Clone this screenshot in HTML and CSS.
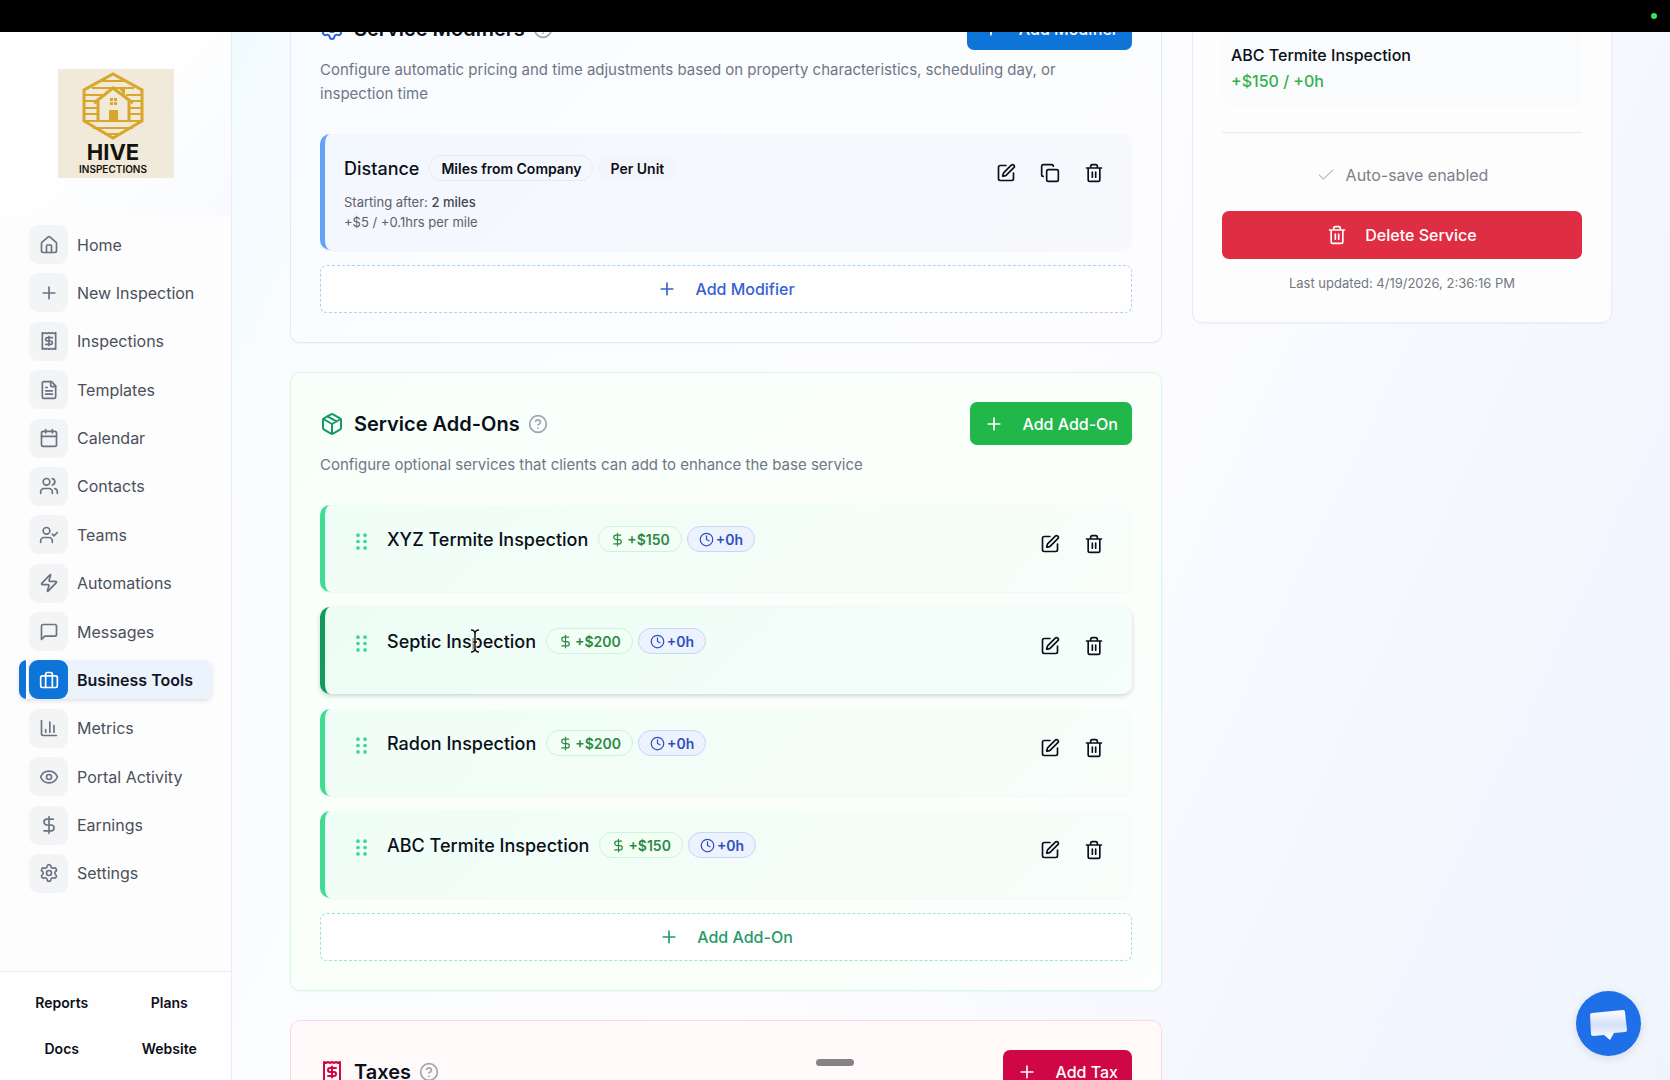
FILE: index.html
```html
<!DOCTYPE html>
<html lang="en">
<head>
    <meta charset="UTF-8">
    <meta name="viewport" content="width=device-width, initial-scale=1.0">
    <title>Hive Inspections - Business Tools</title>
    <link rel="stylesheet" href="styles.css">
</head>
<body>
    <!-- icon sprite -->
    <svg class="sprite" aria-hidden="true">
        <symbol id="i-home" viewBox="0 0 24 24"><path d="M15 21v-8a1 1 0 0 0-1-1h-4a1 1 0 0 0-1 1v8"/><path d="M3 10a2 2 0 0 1 .709-1.528l7-5.999a2 2 0 0 1 2.582 0l7 5.999A2 2 0 0 1 21 10v9a2 2 0 0 1-2 2H5a2 2 0 0 1-2-2z"/></symbol>
        <symbol id="i-plus" viewBox="0 0 24 24"><path d="M5 12h14M12 5v14"/></symbol>
        <symbol id="i-receipt" viewBox="0 0 24 24"><path d="M4 2v20l2-1 2 1 2-1 2 1 2-1 2 1 2-1 2 1V2l-2 1-2-1-2 1-2-1-2 1-2-1-2 1Z"/><path d="M16 8h-6a2 2 0 1 0 0 4h4a2 2 0 1 1 0 4H8M12 17.5v-11"/></symbol>
        <symbol id="i-file" viewBox="0 0 24 24"><path d="M15 2H6a2 2 0 0 0-2 2v16a2 2 0 0 0 2 2h12a2 2 0 0 0 2-2V7Z"/><path d="M14 2v4a2 2 0 0 0 2 2h4M10 9H8M16 13H8M16 17H8"/></symbol>
        <symbol id="i-calendar" viewBox="0 0 24 24"><path d="M8 2v4M16 2v4M3 10h18"/><rect width="18" height="18" x="3" y="4" rx="2"/></symbol>
        <symbol id="i-users" viewBox="0 0 24 24"><path d="M16 21v-2a4 4 0 0 0-4-4H6a4 4 0 0 0-4 4v2"/><circle cx="9" cy="7" r="4"/><path d="M22 21v-2a4 4 0 0 0-3-3.870M16 3.130a4 4 0 0 1 0 7.750"/></symbol>
        <symbol id="i-user-check" viewBox="0 0 24 24"><path d="m16 11 2 2 4-4M16 21v-2a4 4 0 0 0-4-4H6a4 4 0 0 0-4 4v2"/><circle cx="9" cy="7" r="4"/></symbol>
        <symbol id="i-zap" viewBox="0 0 24 24"><path d="M4 14a1 1 0 0 1-.78-1.630l9.900-10.200a.5.5 0 0 1 .86.46l-1.920 6.020A1 1 0 0 0 13 10h7a1 1 0 0 1 .78 1.630l-9.900 10.200a.5.5 0 0 1-.86-.46l1.920-6.020A1 1 0 0 0 11 14z"/></symbol>
        <symbol id="i-message" viewBox="0 0 24 24"><path d="M21 15a2 2 0 0 1-2 2H7l-4 4V5a2 2 0 0 1 2-2h14a2 2 0 0 1 2 2z"/></symbol>
        <symbol id="i-briefcase" viewBox="0 0 24 24"><rect width="20" height="14" x="2" y="7" rx="2"/><path d="M16 21V5a2 2 0 0 0-2-2h-4a2 2 0 0 0-2 2v16"/></symbol>
        <symbol id="i-chart" viewBox="0 0 24 24"><path d="M3 3v16a2 2 0 0 0 2 2h16M18 17V9M13 17V5M8 17v-3"/></symbol>
        <symbol id="i-eye" viewBox="0 0 24 24"><path d="M2.062 12.348a1 1 0 0 1 0-.696 10.750 10.750 0 0 1 19.876 0 1 1 0 0 1 0 .696 10.750 10.750 0 0 1-19.876 0"/><circle cx="12" cy="12" r="3"/></symbol>
        <symbol id="i-dollar" viewBox="0 0 24 24"><path d="M12 2v20M17 5H9.500a3.500 3.500 0 0 0 0 7h5a3.500 3.500 0 0 1 0 7H6"/></symbol>
        <symbol id="i-settings" viewBox="0 0 24 24"><path d="M9.671 4.136a2.340 2.340 0 0 1 4.659 0 2.340 2.340 0 0 0 3.319 1.915 2.340 2.340 0 0 1 2.330 4.033 2.340 2.340 0 0 0 0 3.831 2.340 2.340 0 0 1-2.330 4.033 2.340 2.340 0 0 0-3.319 1.915 2.340 2.340 0 0 1-4.659 0 2.340 2.340 0 0 0-3.320-1.915 2.340 2.340 0 0 1-2.330-4.033 2.340 2.340 0 0 0 0-3.831A2.340 2.340 0 0 1 6.350 6.051a2.340 2.340 0 0 0 3.319-1.915"/><circle cx="12" cy="12" r="3"/></symbol>
        <symbol id="i-help" viewBox="0 0 24 24"><circle cx="12" cy="12" r="10"/><path d="M9.090 9a3 3 0 0 1 5.830 1c0 2-3 3-3 3M12 17h.01"/></symbol>
        <symbol id="i-edit" viewBox="0 0 24 24"><path d="M12 3H5a2 2 0 0 0-2 2v14a2 2 0 0 0 2 2h14a2 2 0 0 0 2-2v-7"/><path d="M18.375 2.625a1 1 0 0 1 3 3l-9.013 9.014a2 2 0 0 1-.853.505l-2.873.84a.5.5 0 0 1-.62-.62l.84-2.873a2 2 0 0 1 .506-.852z"/></symbol>
        <symbol id="i-copy" viewBox="0 0 24 24"><rect width="14" height="14" x="8" y="8" rx="2"/><path d="M4 16c-1.100 0-2-.9-2-2V4c0-1.100.9-2 2-2h10c1.100 0 2 .9 2 2"/></symbol>
        <symbol id="i-trash" viewBox="0 0 24 24"><path d="M3 6h18M19 6v14c0 1-1 2-2 2H7c-1 0-2-1-2-2V6M8 6V4c0-1 1-2 2-2h4c1 0 2 1 2 2v2M10 11v6M14 11v6"/></symbol>
        <symbol id="i-package" viewBox="0 0 24 24"><path d="M11 21.730a2 2 0 0 0 2 0l7-4A2 2 0 0 0 21 16V8a2 2 0 0 0-1-1.730l-7-4a2 2 0 0 0-2 0l-7 4A2 2 0 0 0 3 8v8a2 2 0 0 0 1 1.730zM12 22V12"/><path d="M3.290 7 12 12l8.710-5M7.500 4.270l9 5.150"/></symbol>
        <symbol id="i-clock" viewBox="0 0 24 24"><circle cx="12" cy="12" r="10"/><path d="M12 6v6l4 2"/></symbol>
        <symbol id="i-check" viewBox="0 0 24 24"><path d="M20 6 9 17l-5-5"/></symbol>
        <symbol id="i-grip" viewBox="0 0 24 24"><g fill="currentColor" stroke="none"><circle cx="7" cy="3" r="2.600"/><circle cx="17" cy="3" r="2.600"/><circle cx="7" cy="12" r="2.600"/><circle cx="17" cy="12" r="2.600"/><circle cx="7" cy="21" r="2.600"/><circle cx="17" cy="21" r="2.600"/></g></symbol>
    </svg>

    <div class="top-bar"><span class="camera-dot"></span></div>

    <div class="app">
        <aside class="sidebar">
            <div class="brand">
                <svg class="logo" viewBox="0 0 116 109" role="img" aria-label="Hive Inspections">
                    <rect width="116" height="109" fill="#f1e9d9"/>
                    <g fill="none" stroke="#d8a62b" stroke-width="2">
                        <path d="M55 5 84 21v31L55 69 26 52V21Z" stroke-width="3"/>
                        <path d="M44 12h22M34 19h42M27 26h17M68 26h16M27 32h11M73 32h11M27 39h13M71 39h13M27 45h13M71 45h13M27 52h57M35 59h40M46 65h18"/>
                        <path d="M40 52V30M71 52V30M36 34l19-15 20 15" stroke-width="3"/>
                    </g>
                    <path d="M60 18h7v9z" fill="#d8a62b"/>
                    <path d="M51 41h9v11h-9zM52 29h3v3h-3zM56 29h3v3h-3zM52 33h3v3h-3zM56 33h3v3h-3z" fill="#d8a62b"/>
                    <text class="logo-name" x="55" y="91" text-anchor="middle">HIVE</text>
                    <text class="logo-sub" x="55" y="104" text-anchor="middle">INSPECTIONS</text>
                </svg>
            </div>
            <nav class="nav">
                <a class="nav-item" href="#"><span class="nav-icon"><svg class="icon"><use href="#i-home"/></svg></span>Home</a>
                <a class="nav-item" href="#"><span class="nav-icon"><svg class="icon"><use href="#i-plus"/></svg></span>New Inspection</a>
                <a class="nav-item" href="#"><span class="nav-icon"><svg class="icon"><use href="#i-receipt"/></svg></span>Inspections</a>
                <a class="nav-item" href="#"><span class="nav-icon"><svg class="icon"><use href="#i-file"/></svg></span>Templates</a>
                <a class="nav-item" href="#"><span class="nav-icon"><svg class="icon"><use href="#i-calendar"/></svg></span>Calendar</a>
                <a class="nav-item" href="#"><span class="nav-icon"><svg class="icon"><use href="#i-users"/></svg></span>Contacts</a>
                <a class="nav-item" href="#"><span class="nav-icon"><svg class="icon"><use href="#i-user-check"/></svg></span>Teams</a>
                <a class="nav-item" href="#"><span class="nav-icon"><svg class="icon"><use href="#i-zap"/></svg></span>Automations</a>
                <a class="nav-item" href="#"><span class="nav-icon"><svg class="icon"><use href="#i-message"/></svg></span>Messages</a>
                <a class="nav-item active" href="#" aria-current="page"><span class="nav-icon"><svg class="icon"><use href="#i-briefcase"/></svg></span>Business Tools</a>
                <a class="nav-item" href="#"><span class="nav-icon"><svg class="icon"><use href="#i-chart"/></svg></span>Metrics</a>
                <a class="nav-item" href="#"><span class="nav-icon"><svg class="icon"><use href="#i-eye"/></svg></span>Portal Activity</a>
                <a class="nav-item" href="#"><span class="nav-icon"><svg class="icon"><use href="#i-dollar"/></svg></span>Earnings</a>
                <a class="nav-item" href="#"><span class="nav-icon"><svg class="icon"><use href="#i-settings"/></svg></span>Settings</a>
            </nav>
            <div class="side-links">
                <a href="#">Reports</a>
                <a href="#">Plans</a>
                <a href="#">Docs</a>
                <a href="#">Website</a>
            </div>
        </aside>

        <main class="main">
            <div class="content">
                <div class="column">
                    <section class="card modifiers">
                        <div class="card-header">
                            <svg class="icon title-icon"><use href="#i-settings"/></svg>
                            <h2>Service Modifiers</h2>
                            <button class="help" aria-label="About modifiers"><svg class="icon"><use href="#i-help"/></svg></button>
                            <button class="btn"><svg class="icon"><use href="#i-plus"/></svg>Add Modifier</button>
                        </div>
                        <p class="description">Configure automatic pricing and time adjustments based on property characteristics, scheduling day, or inspection time</p>
                        <div class="items">
                            <div class="item">
                                <div class="item-body">
                                    <div class="item-title">
                                        <h3>Distance</h3>
                                        <span class="badge outline">Miles from Company</span>
                                        <span class="badge plain">Per Unit</span>
                                    </div>
                                    <p class="detail">Starting after: <strong>2 miles</strong><br>+$5 / +0.1hrs per mile</p>
                                </div>
                                <div class="actions">
                                    <button aria-label="Edit"><svg class="icon"><use href="#i-edit"/></svg></button>
                                    <button aria-label="Duplicate"><svg class="icon"><use href="#i-copy"/></svg></button>
                                    <button aria-label="Delete"><svg class="icon"><use href="#i-trash"/></svg></button>
                                </div>
                            </div>
                            <button class="add-row"><svg class="icon"><use href="#i-plus"/></svg>Add Modifier</button>
                        </div>
                    </section>

                    <section class="card addons">
                        <div class="card-header">
                            <svg class="icon title-icon"><use href="#i-package"/></svg>
                            <h2>Service Add-Ons</h2>
                            <button class="help" aria-label="About add-ons"><svg class="icon"><use href="#i-help"/></svg></button>
                            <button class="btn"><svg class="icon"><use href="#i-plus"/></svg>Add Add-On</button>
                        </div>
                        <p class="description">Configure optional services that clients can add to enhance the base service</p>
                        <div class="items">
                            <div class="item">
                                <svg class="icon grip"><use href="#i-grip"/></svg>
                                <div class="item-title">
                                    <h3>XYZ Termite Inspection</h3>
                                    <span class="badge price"><svg class="icon"><use href="#i-dollar"/></svg>+$150</span>
                                    <span class="badge time"><svg class="icon"><use href="#i-clock"/></svg>+0h</span>
                                </div>
                                <div class="actions">
                                    <button aria-label="Edit"><svg class="icon"><use href="#i-edit"/></svg></button>
                                    <button aria-label="Delete"><svg class="icon"><use href="#i-trash"/></svg></button>
                                </div>
                            </div>
                            <div class="item hovered">
                                <svg class="icon grip"><use href="#i-grip"/></svg>
                                <div class="item-title">
                                    <h3>Septic Inspection</h3>
                                    <span class="badge price"><svg class="icon"><use href="#i-dollar"/></svg>+$200</span>
                                    <span class="badge time"><svg class="icon"><use href="#i-clock"/></svg>+0h</span>
                                </div>
                                <div class="actions">
                                    <button aria-label="Edit"><svg class="icon"><use href="#i-edit"/></svg></button>
                                    <button aria-label="Delete"><svg class="icon"><use href="#i-trash"/></svg></button>
                                </div>
                                <svg class="text-cursor" viewBox="0 0 10 24" aria-hidden="true"><path d="M1 1q4 0 4 4v14q0 4-4 4M9 1q-4 0-4 4M9 23q-4 0-4-4M3 13h4" stroke="#fff" stroke-width="3"/><path d="M1 1q4 0 4 4v14q0 4-4 4M9 1q-4 0-4 4M9 23q-4 0-4-4M3 13h4" stroke="#111" stroke-width="1.500"/></svg>
                            </div>
                            <div class="item">
                                <svg class="icon grip"><use href="#i-grip"/></svg>
                                <div class="item-title">
                                    <h3>Radon Inspection</h3>
                                    <span class="badge price"><svg class="icon"><use href="#i-dollar"/></svg>+$200</span>
                                    <span class="badge time"><svg class="icon"><use href="#i-clock"/></svg>+0h</span>
                                </div>
                                <div class="actions">
                                    <button aria-label="Edit"><svg class="icon"><use href="#i-edit"/></svg></button>
                                    <button aria-label="Delete"><svg class="icon"><use href="#i-trash"/></svg></button>
                                </div>
                            </div>
                            <div class="item">
                                <svg class="icon grip"><use href="#i-grip"/></svg>
                                <div class="item-title">
                                    <h3>ABC Termite Inspection</h3>
                                    <span class="badge price"><svg class="icon"><use href="#i-dollar"/></svg>+$150</span>
                                    <span class="badge time"><svg class="icon"><use href="#i-clock"/></svg>+0h</span>
                                </div>
                                <div class="actions">
                                    <button aria-label="Edit"><svg class="icon"><use href="#i-edit"/></svg></button>
                                    <button aria-label="Delete"><svg class="icon"><use href="#i-trash"/></svg></button>
                                </div>
                            </div>
                            <button class="add-row"><svg class="icon"><use href="#i-plus"/></svg>Add Add-On</button>
                        </div>
                    </section>

                    <section class="card taxes">
                        <div class="card-header">
                            <svg class="icon title-icon"><use href="#i-receipt"/></svg>
                            <h2>Taxes</h2>
                            <button class="help" aria-label="About taxes"><svg class="icon"><use href="#i-help"/></svg></button>
                            <button class="btn"><svg class="icon"><use href="#i-plus"/></svg>Add Tax</button>
                        </div>
                    </section>
                </div>

                <section class="card summary">
                    <div class="summary-item">
                        <div>ABC Termite Inspection</div>
                        <div class="summary-price">+$150 / +0h</div>
                    </div>
                    <hr>
                    <p class="autosave"><svg class="icon"><use href="#i-check"/></svg>Auto-save enabled</p>
                    <button class="delete"><svg class="icon"><use href="#i-trash"/></svg>Delete Service</button>
                    <p class="updated">Last updated: 4/19/2026, 2:36:16 PM</p>
                </section>
            </div>
        </main>
    </div>

    <div class="drag-handle"></div>
    <button class="chat" aria-label="Open chat">
        <svg viewBox="0 0 65 65">
            <defs><linearGradient id="bubble" x1="0" y1="0" x2="0" y2="1"><stop offset="0" stop-color="#fff"/><stop offset=".5" stop-color="#d5e0fa"/><stop offset="1" stop-color="#fff"/></linearGradient></defs>
            <path d="M16 22l31-3q2 0 2 2l2 18q0 2-2 2l-11 1-4 7-6-5-11 1q-2 0-2-2l-1-19q0-2 2-2z" fill="url(#bubble)"/>
        </svg>
    </button>
</body>
</html>
```
FILE: styles.css
```css
* {
    box-sizing: border-box;
}
body {
    font-family: Inter, "Liberation Sans", sans-serif;
    font-size: 16px;
    color: #0b0f19;
    margin: 0;
    height: 100vh;
    display: flex;
    flex-direction: column;
    overflow: hidden;
}
h2, h3, p {
    margin: 0;
}
button {
    font: inherit;
    color: inherit;
    background: none;
    border: none;
    padding: 0;
    cursor: pointer;
}
a {
    color: inherit;
    text-decoration: none;
}
.sprite {
    display: none;
}
.icon {
    width: 20px;
    height: 20px;
    flex-shrink: 0;
    fill: none;
    stroke: currentColor;
    stroke-width: 2;
    stroke-linecap: round;
    stroke-linejoin: round;
}
.top-bar {
    height: 32px;
    flex-shrink: 0;
    background: #000;
    display: flex;
    align-items: center;
    justify-content: flex-end;
    padding-right: 13px;
}
.camera-dot {
    width: 6px;
    height: 6px;
    border-radius: 50%;
    background: #3fe14f;
}
.app {
    display: flex;
    flex: 1;
    min-height: 0;
}

/* sidebar */
.sidebar {
    width: 232px;
    flex-shrink: 0;
    display: flex;
    flex-direction: column;
    background: #fdfdfe;
    border-right: 1px solid #e9ecf1;
}
.brand {
    display: flex;
    justify-content: center;
    padding: 37px 0;
    background: linear-gradient(135deg, #fff 40%, #f8fafe);
}
.logo {
    width: 116px;
    height: 109px;
}
.logo-name {
    font-size: 22px;
    font-weight: 700;
    fill: #14120c;
}
.logo-sub {
    font-size: 10px;
    font-weight: 600;
    fill: #14120c;
}
.nav {
    flex: 1;
    display: flex;
    flex-direction: column;
    justify-content: space-between;
    padding: 10px 19px 78px;
}
.nav-item {
    display: flex;
    align-items: center;
    gap: 9px;
    height: 39px;
    padding-left: 10px;
    border-radius: 8px;
    color: #4b505a;
}
.nav-icon {
    width: 39px;
    height: 39px;
    display: flex;
    align-items: center;
    justify-content: center;
    border-radius: 9px;
    background: #f3f4f6;
    color: #6b7280;
}
.nav-item.active {
    background: linear-gradient(90deg, #0f74d8 7px, #fff 7px, #fff 9px, #edf3fd 9px);
    box-shadow: 0 2px 4px rgba(15, 23, 42, 0.12);
    color: #111827;
    font-weight: 600;
}
.active .nav-icon {
    background: #0f74d8;
    color: #fff;
}
.side-links {
    display: grid;
    grid-template-columns: 1fr 1fr;
    padding: 8px;
    border-top: 1px solid #eceef1;
    font-size: 14px;
    font-weight: 600;
    text-align: center;
    line-height: 46px;
    background: #fefefe;
}

/* main area */
.main {
    flex: 1;
    min-width: 0;
    overflow: hidden;
    padding: 0 58px;
    background: linear-gradient(115deg, #f1fbfe 0%, #fafcff 12%, #fdfdff 50%, #f9faff 65%, #f4f6fe 80%, #f0f5fd 100%);
}
/* page is scrolled part of the way down */
.content {
    margin-top: -55px;
    display: grid;
    grid-template-columns: minmax(0, 1fr) 420px;
    gap: 30px;
    align-items: start;
}
.column {
    display: flex;
    flex-direction: column;
    gap: 29px;
}
.card {
    border: 1px solid;
    border-radius: 10px;
    padding: 29px;
    box-shadow: 0 1px 2px rgba(15, 23, 42, 0.04);
}
.card-header {
    display: flex;
    align-items: center;
    height: 43px;
}
.card-header h2 {
    font-size: 20px;
    font-weight: 600;
    margin: 0 8px 0 10px;
}
.title-icon {
    width: 24px;
    height: 24px;
}
.help {
    display: flex;
    color: #a0a6af;
}
.btn {
    display: flex;
    align-items: center;
    gap: 18px;
    height: 43px;
    margin-left: auto;
    padding: 0 14px;
    border-radius: 7px;
    color: #fff;
    font-weight: 500;
}
.description {
    margin-top: 8px;
    font-size: 15px;
    line-height: 24px;
    color: #6f7686;
}
.items {
    display: flex;
    flex-direction: column;
    gap: 15px;
    margin-top: 28px;
}
.item {
    position: relative;
    display: flex;
    align-items: flex-start;
    min-height: 87px;
    padding: 18px 16px 18px 19px;
    border-left: 5px solid;
    border-radius: 10px;
    box-shadow: 0 1px 2px rgba(15, 23, 42, 0.04);
}
.item-title {
    display: flex;
    align-items: center;
    gap: 5px;
    height: 32px;
}
.item-title h3 {
    font-size: 18px;
    font-weight: 500;
    margin-right: 5px;
}
.badge {
    display: flex;
    align-items: center;
    height: 26px;
    padding: 0 11px;
    border: 1px solid;
    border-radius: 13px;
    font-size: 14px;
    font-weight: 600;
}
.badge .icon {
    width: 15px;
    height: 15px;
}
.outline {
    border-color: #e6eaf1;
}
.plain {
    border-color: transparent;
    background: #f4f5fa;
}
.price {
    gap: 2px;
    color: #2b8a43;
    border-color: #c9f6d8;
    background: #f3fef6;
}
.time {
    gap: 2px;
    color: #2f4fc0;
    border-color: #c6d6f6;
    background: #edf3fe;
}
.detail {
    margin-top: 8px;
    font-size: 13px;
    line-height: 20px;
    color: #5b616d;
}
.detail strong {
    font-weight: 500;
    color: #3f4550;
}
.actions {
    display: flex;
    margin-left: auto;
}
.actions button {
    width: 44px;
    height: 42px;
    display: flex;
    align-items: center;
    justify-content: center;
}
.add-row {
    display: flex;
    align-items: center;
    justify-content: center;
    gap: 18px;
    height: 48px;
    border: 1px dashed;
    border-radius: 7px;
    background: #fefefe;
    font-weight: 500;
}

/* card colours */
.modifiers {
    background: linear-gradient(135deg, #f9fcff, #fdfdff);
    border-color: #dfeafb;
}
.modifiers .title-icon {
    color: #2d62d8;
}
.modifiers .btn {
    background: #0f74d8;
}
.modifiers .item {
    min-height: 116px;
    padding-bottom: 0;
    border-color: #63a4f4;
    background: linear-gradient(135deg, #f3f7fe, #f8f9fd);
}
.modifiers .add-row {
    color: #3562cf;
    border-color: #a9d2f5;
}
.addons {
    background: linear-gradient(135deg, #f8fffa, #fcfffd);
    border-color: #d3fae2;
}
.addons .title-icon {
    color: #159a67;
}
.addons .btn {
    background: #22b74b;
}
.addons .item {
    border-color: #40db95;
    background: linear-gradient(135deg, #effef6, #f8fdfa);
}
.addons .item.hovered {
    border-color: #14995f;
    background: linear-gradient(135deg, #edfdf5, #f4fefb);
    box-shadow: 0 2px 5px rgba(15, 23, 42, 0.18);
}
.addons .add-row {
    color: #279a6a;
    border-color: #9be8c4;
}
.grip {
    width: 17px;
    height: 17px;
    margin: 10px 17px 0 9px;
    color: #3fd796;
}
.text-cursor {
    position: absolute;
    left: 145px;
    top: 22px;
    width: 10px;
    height: 24px;
    fill: none;
}
.taxes {
    background: #fff9fa;
    border-color: #fcd9e1;
}
.taxes .title-icon {
    color: #cf0745;
}
.taxes .btn {
    background: #cf0745;
}

/* summary column */
.summary {
    margin-top: 23px;
    background: #fdfdfe;
    border-color: #ebebf8;
}
.summary-item {
    padding: 12px 9px;
    border-radius: 8px;
    background: #f9fbfc;
    font-weight: 500;
    line-height: 26px;
}
.summary-price {
    color: #33b04e;
}
.summary hr {
    margin: 26px 0 28px;
    border: none;
    border-top: 1px solid #e6e8ec;
}
.autosave {
    display: flex;
    align-items: center;
    justify-content: center;
    gap: 10px;
    height: 28px;
    color: #7b808a;
}
.autosave .icon {
    stroke-width: 1;
}
.delete {
    display: flex;
    align-items: center;
    justify-content: center;
    gap: 18px;
    width: 100%;
    height: 48px;
    margin: 22px 0 14px;
    border-radius: 7px;
    background: #df2d43;
    color: #fff;
    font-weight: 500;
}
.updated {
    text-align: center;
    font-size: 13px;
    line-height: 20px;
    color: #737882;
}

/* floating */
.drag-handle {
    position: fixed;
    left: calc(50% - 19px);
    bottom: 14px;
    width: 38px;
    height: 7px;
    border-radius: 4px;
    background: #858283;
}
.chat {
    position: fixed;
    right: 29px;
    bottom: 24px;
    width: 65px;
    height: 65px;
    border-radius: 50%;
    background: #1f70e8;
    box-shadow: 0 2px 10px rgba(15, 23, 42, 0.12);
}
```
